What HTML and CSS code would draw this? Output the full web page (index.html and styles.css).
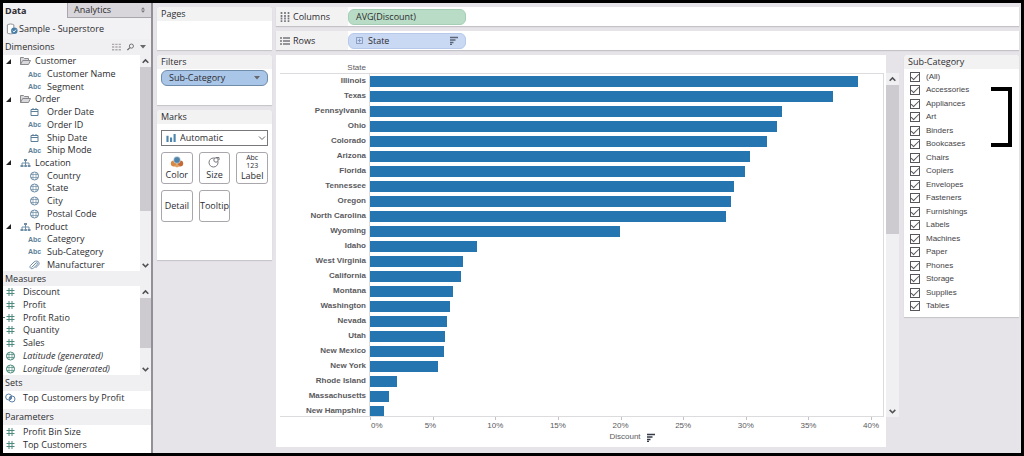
FILE: index.html
```html
<!DOCTYPE html>
<html lang="en">
<head>
<meta charset="utf-8">
<title>Sample - Superstore</title>
<link rel="stylesheet" href="styles.css">
</head>
<body>
<svg class="sprite" aria-hidden="true">
  <symbol id="folder" viewBox="0 0 12 10"><path d="M1 8.500V1.500h3l1 1h4v2M1 8.500l2.200-4H11L9 8.500z" fill="#d9d9dc" stroke="#88888d"/></symbol>
  <symbol id="tree" viewBox="0 0 12 10"><path d="M6 3v2M2.500 7V5h7v2M6 5v2" fill="none" stroke="#6f8ea6"/><path d="M4.500 1h3v2h-3zM1 7h3v2H1zM4.800 7h2.600v2H4.800zM8.200 7H11v2H8.200z" fill="#6f8ea6"/></symbol>
  <symbol id="date" viewBox="0 0 10 10"><path d="M1.500 2.500h7v6h-7zM1.500 4.500h7M3.500 1v1.500M6.500 1v1.500" fill="none" stroke="#5b7f99"/></symbol>
  <symbol id="globe" viewBox="0 0 10 10"><circle cx="5" cy="5" r="4" fill="none" stroke="currentColor"/><path d="M3.500 1.500v7M6.500 1.500v7M1 3.500h8M1 6.500h8" fill="none" stroke="currentColor" stroke-width=".7"/></symbol>
  <symbol id="clip" viewBox="0 0 12 10"><path d="M3 7.500L7.500 3c1.200-1 2.400.3 1.300 1.500L5 8C3 9.800.3 7.600 2 5.500L5.500 2C8-.2 12 1.800 10.200 4.800L7 8" fill="none" stroke="#6f8ea6"/></symbol>
  <symbol id="hash" viewBox="0 0 10 10"><path d="M3.500 1v8M6.500 1v8M1 3.500h8M1 6.500h8" fill="none" stroke="#4b8a7c"/></symbol>
  <symbol id="sets" viewBox="0 0 12 10"><circle cx="4.200" cy="4" r="3" fill="none" stroke="#5b7fa6"/><circle cx="7.500" cy="6" r="3" fill="none" stroke="#5b7fa6"/><path d="M4.800 5l2-2 .5 2.500-2 1.500z" fill="#5b7fa6"/></symbol>
  <symbol id="up" viewBox="0 0 8 8"><path d="M1.500 5.500L4 3l2.500 2.500" fill="none" stroke="#505054" stroke-width="1.400"/></symbol>
  <symbol id="down" viewBox="0 0 8 8"><path d="M1.500 3L4 5.500 6.500 3" fill="none" stroke="#505054" stroke-width="1.400"/></symbol>
  <symbol id="sort" viewBox="0 0 9 9"><path d="M1 1.500h8M1 4h5.500M1 6.500h3.500M1 8.500h2" fill="none" stroke="currentColor" stroke-width="1.600"/></symbol>
  <symbol id="caret" viewBox="0 0 6 4"><path d="M0 0h6L3 3.500z" fill="currentColor"/></symbol>
</svg>
<div class="app">
  <aside class="sidebar">
    <nav class="tabs">
      <button class="tab tab-on">Data</button>
      <button class="tab">Analytics <svg class="spin" viewBox="0 0 5 7"><path d="M0 3l2.500-3L5 3zM0 4h5L2.500 7z" fill="#77777c"/></svg></button>
    </nav>
    <div class="source">
      <svg class="db" viewBox="0 0 13 13"><path d="M1.500 2v9c2 1 5 1 7 0V2c-2-1.200-5-1.200-7 0z" fill="#fff" stroke="#88898e"/><circle cx="9" cy="8.500" r="3.500" fill="#4a7fa8"/><path d="M7.300 8.500l1.300 1.300 2.200-2.600" fill="none" stroke="#fff"/></svg>
      <span>Sample - Superstore</span>
    </div>
    <div class="heading">
      <h2>Dimensions</h2>
      <svg class="tool" viewBox="0 0 10 8"><path d="M0 1h2.500M3.700 1h2.500M7.400 1h2.500M0 4h2.500M3.700 4h2.500M7.400 4h2.500M0 7h2.500M3.700 7h2.500M7.400 7h2.500" stroke="#aaa9ad" stroke-width="1.500"/></svg>
      <svg class="tool" viewBox="0 0 10 8"><circle cx="6" cy="3" r="2.300" fill="none" stroke="#66666b"/><path d="M4.300 4.700L1.500 7.500" stroke="#66666b" stroke-width="1.400"/></svg>
      <svg class="caret" viewBox="0 0 6 4"><use href="#caret"/></svg>
    </div>
    <div class="list dimensions">
      <ul class="fields">
        <li class="group"><svg class="icon"><use href="#folder"/></svg>Customer</li>
        <li><span class="abc">Abc</span>Customer Name</li>
        <li><span class="abc">Abc</span>Segment</li>
        <li class="group"><svg class="icon"><use href="#folder"/></svg>Order</li>
        <li><svg class="icon"><use href="#date"/></svg>Order Date</li>
        <li><span class="abc">Abc</span>Order ID</li>
        <li><svg class="icon"><use href="#date"/></svg>Ship Date</li>
        <li><span class="abc">Abc</span>Ship Mode</li>
        <li class="group"><svg class="icon"><use href="#tree"/></svg>Location</li>
        <li><svg class="icon"><use href="#globe"/></svg>Country</li>
        <li><svg class="icon"><use href="#globe"/></svg>State</li>
        <li><svg class="icon"><use href="#globe"/></svg>City</li>
        <li><svg class="icon"><use href="#globe"/></svg>Postal Code</li>
        <li class="group"><svg class="icon"><use href="#tree"/></svg>Product</li>
        <li><span class="abc">Abc</span>Category</li>
        <li><span class="abc">Abc</span>Sub-Category</li>
        <li><svg class="icon"><use href="#clip"/></svg>Manufacturer</li>
      </ul>
      <div class="scroll"><svg><use href="#up"/></svg><i class="thumb thumb-dim"></i><svg><use href="#down"/></svg></div>
    </div>
    <div class="heading"><h2>Measures</h2></div>
    <div class="list measures">
      <ul class="fields flat">
        <li><svg class="icon"><use href="#hash"/></svg>Discount</li>
        <li><svg class="icon"><use href="#hash"/></svg>Profit</li>
        <li class="calc"><svg class="icon"><use href="#hash"/></svg>Profit Ratio</li>
        <li><svg class="icon"><use href="#hash"/></svg>Quantity</li>
        <li><svg class="icon"><use href="#hash"/></svg>Sales</li>
        <li class="generated"><svg class="icon"><use href="#globe"/></svg>Latitude (generated)</li>
        <li class="generated"><svg class="icon"><use href="#globe"/></svg>Longitude (generated)</li>
      </ul>
      <div class="scroll"><svg><use href="#up"/></svg><i class="thumb thumb-mea"></i><svg><use href="#down"/></svg></div>
    </div>
    <div class="heading tall"><h2>Sets</h2></div>
    <ul class="fields flat sets"><li><svg class="icon"><use href="#sets"/></svg>Top Customers by Profit</li></ul>
    <div class="heading tall"><h2>Parameters</h2></div>
    <ul class="fields flat params">
      <li><svg class="icon"><use href="#hash"/></svg>Profit Bin Size</li>
      <li><svg class="icon"><use href="#hash"/></svg>Top Customers</li>
    </ul>
  </aside>

  <div class="cards">
    <section class="card pages"><h2>Pages</h2></section>
    <section class="card filters"><h2>Filters</h2>
      <button class="pill pill-filter">Sub-Category <svg class="caret" viewBox="0 0 6 4"><use href="#caret"/></svg></button>
    </section>
    <section class="card marks"><h2>Marks</h2>
      <div class="mark-type">
        <svg class="bars-icon" viewBox="0 0 12 9"><path d="M1.500 9V2M5.500 9V4M9.500 9V0" stroke="#4c86ad" stroke-width="2.400"/></svg>
        <select aria-label="Mark type"><option>Automatic</option></select>
        <svg class="chevron" viewBox="0 0 8 8"><path d="M1 2.500l3 3 3-3" fill="none" stroke="#66666b"/></svg>
      </div>
      <div class="mark-grid">
        <button><svg class="mark-icon" viewBox="0 0 14 12"><circle cx="3.800" cy="7.500" r="3" fill="#d58a45"/><circle cx="10.200" cy="7.500" r="3" fill="#c56a32"/><path d="M4 10l3-2 3 2-3 1.500z" fill="#e0a060"/><circle cx="7" cy="4" r="3.400" fill="#4f83a8" stroke="#fff" stroke-width=".5"/></svg>Color</button>
        <button><svg class="mark-icon" viewBox="0 0 14 12"><circle cx="6.500" cy="6.500" r="4.500" fill="none" stroke="#77777c"/><circle cx="9" cy="4" r="2.200" fill="#fff" stroke="#77777c"/><path d="M9 1.500h3V4" fill="none" stroke="#77777c"/></svg>Size</button>
        <button><span class="abc123">Abc<br>123</span>Label</button>
        <button>Detail</button>
        <button>Tooltip</button>
      </div>
    </section>
  </div>

  <main class="work">
    <div class="shelf">
      <div class="shelf-name"><svg class="shelf-icon" viewBox="0 0 10 10"><path d="M1.500 0v2M5 0v2M8.500 0v2M1.500 3v7M5 3v7M8.500 3v7" stroke="#77777c" stroke-width="1.700" stroke-dasharray="2 .6"/></svg>Columns</div>
      <button class="pill pill-green">AVG(Discount)</button>
    </div>
    <div class="shelf">
      <div class="shelf-name"><svg class="shelf-icon" viewBox="0 0 10 10"><path d="M0 2h2M0 5h2M0 8h2M3 2h7M3 5h7M3 8h7" stroke="#77777c" stroke-width="1.400"/></svg>Rows</div>
      <button class="pill pill-blue"><svg class="plus" viewBox="0 0 8 8"><path d="M.5.5h7v7h-7zM2 4h4M4 2v4" fill="none" stroke="#7f93b8"/></svg>State<svg class="sort"><use href="#sort"/></svg></button>
    </div>
    <div class="view">
      <section class="chart">
        <div class="plot-top"><span>State</span></div>
        <div class="plot">
          <div class="row"><span>Illinois</span><div><i style="width:95.1%"></i></div></div>
          <div class="row"><span>Texas</span><div><i style="width:90.3%"></i></div></div>
          <div class="row"><span>Pennsylvania</span><div><i style="width:80.3%"></i></div></div>
          <div class="row"><span>Ohio</span><div><i style="width:79.3%"></i></div></div>
          <div class="row"><span>Colorado</span><div><i style="width:77.3%"></i></div></div>
          <div class="row"><span>Arizona</span><div><i style="width:74.1%"></i></div></div>
          <div class="row"><span>Florida</span><div><i style="width:73.1%"></i></div></div>
          <div class="row"><span>Tennessee</span><div><i style="width:71%"></i></div></div>
          <div class="row"><span>Oregon</span><div><i style="width:70.4%"></i></div></div>
          <div class="row"><span>North Carolina</span><div><i style="width:69.3%"></i></div></div>
          <div class="row"><span>Wyoming</span><div><i style="width:48.8%"></i></div></div>
          <div class="row"><span>Idaho</span><div><i style="width:20.8%"></i></div></div>
          <div class="row"><span>West Virginia</span><div><i style="width:18.1%"></i></div></div>
          <div class="row"><span>California</span><div><i style="width:17.8%"></i></div></div>
          <div class="row"><span>Montana</span><div><i style="width:16.1%"></i></div></div>
          <div class="row"><span>Washington</span><div><i style="width:15.6%"></i></div></div>
          <div class="row"><span>Nevada</span><div><i style="width:15%"></i></div></div>
          <div class="row"><span>Utah</span><div><i style="width:14.7%"></i></div></div>
          <div class="row"><span>New Mexico</span><div><i style="width:14.4%"></i></div></div>
          <div class="row"><span>New York</span><div><i style="width:13.3%"></i></div></div>
          <div class="row"><span>Rhode Island</span><div><i style="width:5.2%"></i></div></div>
          <div class="row"><span>Massachusetts</span><div><i style="width:3.7%"></i></div></div>
          <div class="row"><span>New Hampshire</span><div><i style="width:2.7%"></i></div></div>
        </div>
        <div class="axis">
          <span>0%</span><span>5%</span><span>10%</span><span>15%</span><span>20%</span><span>25%</span><span>30%</span><span>35%</span><span>40%</span>
        </div>
        <div class="axis-title">Discount <svg class="sort"><use href="#sort"/></svg></div>
      </section>
      <div class="scroll chart-scroll"><svg><use href="#up"/></svg><i class="thumb thumb-chart"></i><svg><use href="#down"/></svg></div>
      <section class="card quick">
        <h2>Sub-Category</h2>
        <div class="checks">
          <label><input type="checkbox" checked>(All)</label>
          <label><input type="checkbox" checked>Accessories</label>
          <label><input type="checkbox" checked>Appliances</label>
          <label><input type="checkbox" checked>Art</label>
          <label><input type="checkbox" checked>Binders</label>
          <label><input type="checkbox" checked>Bookcases</label>
          <label><input type="checkbox" checked>Chairs</label>
          <label><input type="checkbox" checked>Copiers</label>
          <label><input type="checkbox" checked>Envelopes</label>
          <label><input type="checkbox" checked>Fasteners</label>
          <label><input type="checkbox" checked>Furnishings</label>
          <label><input type="checkbox" checked>Labels</label>
          <label><input type="checkbox" checked>Machines</label>
          <label><input type="checkbox" checked>Paper</label>
          <label><input type="checkbox" checked>Phones</label>
          <label><input type="checkbox" checked>Storage</label>
          <label><input type="checkbox" checked>Supplies</label>
          <label><input type="checkbox" checked>Tables</label>
        </div>
        <div class="bracket"></div>
      </section>
    </div>
  </main>
</div>
</body>
</html>
```
FILE: styles.css
```css
* { box-sizing: border-box; }
body { margin: 0; background: #000; color: #2c2c30; font: 9px/12px "Open Sans", "Noto Sans", sans-serif; }
button, select, input { font: inherit; color: inherit; margin: 0; }
button { cursor: pointer; }
h2 { margin: 0; font-size: 9px; font-weight: 400; line-height: 14px; }
ul { margin: 0; padding: 0; list-style: none; }
svg { flex: none; }
.sprite { position: absolute; width: 0; height: 0; }

.app { display: grid; grid-template-columns: 150px 115px minmax(0, 1fr); column-gap: 4px; min-height: 100vh; background: #e6e4e8; border: 3px solid #000; }

/* data pane */
.sidebar { display: flex; flex-direction: column; background: #fff; border-right: 2px solid #929096; }
.tabs { display: flex; }
.tab { flex: 1; display: flex; align-items: center; justify-content: space-between; height: 15px; padding: 0 6px; border: 0; border-left: 1px solid #a9a7ac; border-bottom: 1px solid #a9a7ac; background: #d8d6da; }
.tab-on { flex: none; width: 64px; padding: 0 2px; border: 0; background: #f2f1f3; font-weight: 700; }
.spin { width: 4px; height: 6px; }
.source { display: flex; align-items: center; gap: 1px; height: 21px; padding-left: 3px; background: #f2f1f3; }
.db { width: 12px; height: 12px; }
.heading { display: flex; align-items: center; gap: 5px; height: 15px; padding: 0 5px 0 2px; background: #f0eff1; }
.heading h2 { flex: 1; }
.heading.tall { height: 16px; }
.source + .heading { height: 16px; }
.tool { width: 9px; height: 8px; }
.caret { width: 6px; height: 4px; color: #66666b; }
.list { display: flex; }
.dimensions { height: 216px; }
.measures { height: 89px; }
.fields { flex: 1; display: grid; grid-auto-rows: 1fr; white-space: nowrap; }
.fields li { display: flex; align-items: center; gap: 6px; min-height: 0; padding-left: 25px; }
.fields .group { padding-left: 3px; gap: 5px; }
.group::before { content: ""; margin-right: 3px; border-left: 5px solid transparent; border-bottom: 5px solid #222; }
.icon { width: 13px; height: 10px; color: #6f8ea6; }
.group .icon { margin-right: -2px; }
.abc { width: 13px; color: #5b7f99; font: 700 7px/9px "Liberation Sans", sans-serif; }
.fields.flat li { padding-left: 1px; }
.flat .icon { color: #4b8a7c; }
.calc { background: linear-gradient(#4b8a7c, #4b8a7c) 0 50% / 2px 1px no-repeat; }
.generated { font-style: italic; }
.sets { flex: none; height: 18px; grid-auto-rows: 13px; }
.params { flex: none; height: 27px; }
.scroll { display: flex; flex-direction: column; align-items: center; width: 11px; background: #f0eff1; }
.scroll svg { width: 9px; height: 12px; }
.scroll svg:last-child { margin-top: auto; }
.thumb { width: 100%; background: #cdcbcf; }
.thumb-dim { height: 144px; }
.thumb-mea { height: 50px; }
.thumb-chart { height: 149px; }

/* shelves and cards */
.cards { display: flex; flex-direction: column; gap: 5px; padding-top: 4px; }
.card { background: #fff; border-radius: 4px 4px 0 0; box-shadow: 0 1px 1px #c4c2c7; }
.card h2 { padding-left: 4px; background: #f3f2f3; border-radius: 4px 4px 0 0; }
.pages { height: 43px; }
.filters { height: 50px; }
.marks { height: 150px; }
.pill { display: flex; align-items: center; height: 16px; padding: 0 7px; border: 1px solid; border-radius: 6px; white-space: nowrap; }
.pill-filter { justify-content: space-between; width: calc(100% - 8px); margin: 1px 4px 0; background: #a9c6e8; border-color: #6f8cab; }
.mark-type { position: relative; margin: 6px 4px 0; }
.mark-type select { display: block; appearance: none; width: 100%; height: 16px; padding: 0 0 0 18px; border: 1px solid #77777c; border-radius: 0; background: #fff; }
.bars-icon { position: absolute; left: 5px; top: 4px; width: 11px; height: 8px; }
.chevron { position: absolute; right: 2px; top: 4px; width: 8px; height: 8px; }
.mark-grid { display: grid; grid-template-columns: repeat(3, 1fr); grid-auto-rows: 32px; gap: 6px; margin: 6px 4px 0; }
.mark-grid button { display: flex; flex-direction: column; align-items: center; justify-content: center; min-width: 0; padding: 0; border: 1px solid #a9a7ac; border-radius: 3px; background: #fff; }
.mark-icon { width: 14px; height: 14px; }
.abc123 { font-size: 7px; line-height: 8px; }

.work { display: flex; flex-direction: column; gap: 5px; min-width: 0; padding: 4px 2px 6px 0; }
.shelf { display: flex; align-items: center; height: 19px; background: #fff; box-shadow: 0 1px 1px #c4c2c7; }
.shelf-name { display: flex; align-items: center; gap: 3px; align-self: stretch; width: 72px; padding-left: 4px; background: #f3f2f3; }
.shelf-icon { width: 10px; height: 10px; }
.shelf .pill { width: 118px; }
.pill-green { background: #b9dcc6; border-color: #a5cfb5; }
.pill-blue { gap: 5px; background: #c9d8f3; border-color: #b7c9ea; }
.plus { width: 7px; height: 7px; }
.sort { width: 9px; height: 9px; color: #5c6678; }
.pill-blue .sort { margin-left: auto; }

/* worksheet */
.view { flex: 1; display: flex; align-items: flex-start; }
.chart { flex: 1; display: flex; flex-direction: column; align-self: stretch; min-width: 0; padding: 8px 2px 0 4px; background: #fff; color: #5a5a5e; font: 8px/10px "Liberation Sans", sans-serif; }
.plot-top { display: flex; height: 10px; }
.plot-top span { width: 86px; text-align: right; }
.plot { height: 344px; overflow: hidden; border: solid #dcdbde; border-width: 1px 1px 1px 0; }
.row { display: grid; grid-template-columns: 89px minmax(0, 1fr); height: 15px; }
.row span { padding-right: 3px; text-align: right; font-weight: 700; line-height: 14px; }
.row div { height: 15px; padding: 2px 0; border-left: 1px solid #dcdbde; }
.row i { display: block; height: 11px; background: #2475b0; }
.axis { display: grid; grid-template-columns: repeat(8, minmax(0, 626fr)) minmax(0, 129fr); padding-left: 90px; line-height: 12px; }
.axis span { padding-top: 3px; background: linear-gradient(#c4c2c7, #c4c2c7) 0 0 / 1px 3px no-repeat; text-indent: 1px; white-space: nowrap; }
.axis span + span { text-indent: -8px; }
.axis-title { display: flex; justify-content: center; align-items: center; gap: 5px; padding-left: 100px; }
.axis-title .sort { color: #333a45; }
.chart-scroll { width: 13px; height: 344px; margin: 18px 5px 0 0; }
.quick { position: relative; width: 115px; padding-bottom: 4px; }
.checks { display: grid; grid-auto-rows: 1fr; height: 244px; padding: 1px 0 0 6px; color: #444448; font: 8px/10px "Liberation Sans", sans-serif; }
.checks label { display: flex; align-items: center; gap: 6px; }
.checks input { appearance: none; display: grid; place-items: center; width: 10px; height: 10px; border: 1px solid #55555a; background: #fff; }
.checks input:checked::before { content: ""; width: 7px; height: 3px; border: solid #55555a; border-width: 0 0 1px 1px; transform: translateY(-1px) rotate(-45deg); }
.bracket { position: absolute; right: 7px; top: 32px; width: 21px; height: 60px; border: 4px solid #000; border-left: 0; }
```
